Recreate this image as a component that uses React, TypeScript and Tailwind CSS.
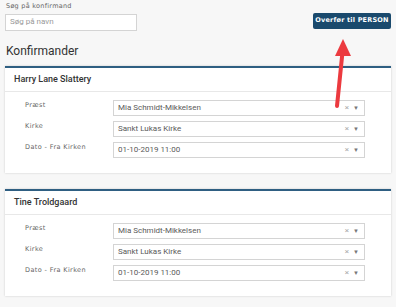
import React from "react";

interface Person {
  name: string;
  praest: string;
  kirke: string;
  dato: string;
}

const people: Person[] = [
  { name: "Harry Lane Slattery", praest: "Mia Schmidt-Mikkelsen", kirke: "Sankt Lukas Kirke", dato: "01-10-2019 11:00" },
  { name: "Tine Troldgaard", praest: "Mia Schmidt-Mikkelsen", kirke: "Sankt Lukas Kirke", dato: "01-10-2019 11:00" },
];

const SelectBox: React.FC<{ value: string }> = ({ value }) => (
  <div className="flex h-[16px] w-[252px] items-center justify-between border border-[#d4d4d4] bg-white pl-[4px] pr-[5px] text-[8px] text-[#5a5a5a]">
    <span>{value}</span>
    <span className="flex items-center gap-[4px] text-[#aaa]">
      <span className="text-[8px] leading-none">×</span>
      <span className="text-[6px] leading-none text-[#777]">▼</span>
    </span>
  </div>
);

const Row: React.FC<{ label: string; value: string }> = ({ label, value }) => (
  <div className="flex items-start">
    <div className="w-[108px] pl-[20px] pt-[1px] text-[6.5px] font-medium tracking-[0.06em] text-[#666]" style={{ fontFamily: "'DejaVu Sans', sans-serif" }}>
      {label}
    </div>
    <SelectBox value={value} />
  </div>
);

const Card: React.FC<{ p: Person }> = ({ p }) => (
  <div className="mx-[5px] border-t-2 border-[#2f5f82] bg-white shadow-[0_0_2px_rgba(0,0,0,0.18)]">
    <div className="flex h-[24px] items-center border-b border-[#e8e8e8] pl-[9px] text-[9px] font-medium text-[#333]">
      {p.name}
    </div>
    <div className="flex flex-col gap-[5px] pb-[15px] pt-[8px]">
      <Row label="Præst" value={p.praest} />
      <Row label="Kirke" value={p.kirke} />
      <Row label="Dato - Fra Kirken" value={p.dato} />
    </div>
  </div>
);

export default function App() {
  return (
    <div className="relative h-[307px] w-[396px] overflow-hidden bg-[#f7f7f7]" style={{ fontFamily: "Roboto, sans-serif" }}>
      <div className="flex justify-between px-[5px] pt-[2px]">
        <div>
          <div className="pl-[1px] text-[6.5px] font-medium tracking-[0.04em] text-[#666]" style={{ fontFamily: "'DejaVu Sans', sans-serif" }}>
            Søg på konfirmand
          </div>
          <div className="mt-[2px] flex h-[17px] w-[132px] items-center border border-[#d4d4d4] bg-white pl-[4px] text-[8px] text-[#999]">
            Søg på navn
          </div>
        </div>
        <button className="mt-[11px] flex h-[16px] w-[78px] items-center justify-center whitespace-nowrap rounded-[2px] bg-[#1a4a6d] text-[6.5px] font-bold tracking-[0.03em] text-white" style={{ fontFamily: "'DejaVu Sans', sans-serif" }}>
          Overfør til PERSON
        </button>
      </div>
      <h2 className="mt-[13px] pl-[6px] text-[12px] font-normal leading-[14px] text-[#333]">Konfirmander</h2>
      <div className="mt-[8px] flex flex-col gap-[16px]">
        {people.map((p, i) => (
          <Card key={i} p={p} />
        ))}
      </div>
      <svg className="pointer-events-none absolute left-0 top-0" width="396" height="307">
        <line x1="337" y1="106" x2="342.5" y2="52" stroke="#ec3a3f" strokeWidth="4" strokeLinecap="round" />
        <polygon points="343,39 351,56 335,56" fill="#ec3a3f" />
      </svg>
    </div>
  );
}
